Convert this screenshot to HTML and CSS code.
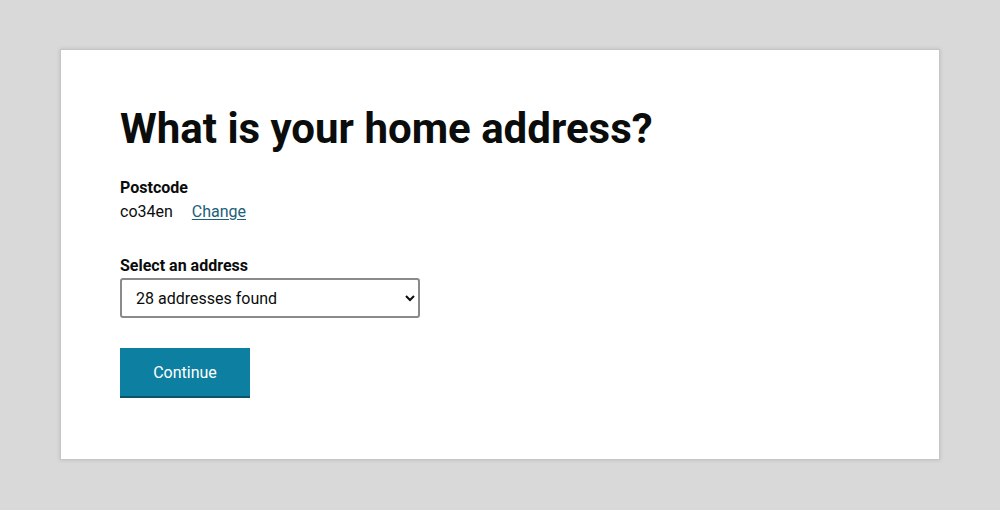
FILE: index.html
```html
<!DOCTYPE html>
<html lang="en">
<head>
<meta charset="utf-8">
<title>What is your home address?</title>
<link rel="stylesheet" href="styles.css">
</head>
<body>
<main class="card">
  <h1 class="title">What is your home address?</h1>
  <div class="postcode">
    <div class="label">Postcode</div>
    <div class="value-row">
      <span class="value">co34en</span>
      <a class="change" href="#">Change</a>
    </div>
  </div>
  <div class="field">
    <label class="label" for="addr">Select an address</label>
    <select class="select" id="addr">
      <option>28 addresses found</option>
    </select>
  </div>
  <button class="btn" type="button">Continue</button>
</main>
</body>
</html>
```
FILE: styles.css
```css
html, body {
  margin: 0;
  padding: 0;
}
body {
  background: #d9d9d9;
  font-family: Roboto, "Liberation Sans", sans-serif;
  color: #0b0c0c;
  padding: 49px 60px 49px 60px;
  height: 510px;
  box-sizing: border-box;
}
.card {
  background: #fff;
  border: 1px solid #c6c6c6;
  box-shadow: 0 0 4px rgba(0, 0, 0, 0.14);
  height: 411px;
  box-sizing: border-box;
  padding: 55px 59px 0;
  display: flex;
  flex-direction: column;
  align-items: flex-start;
}
.title {
  margin: 0;
  font-size: 42px;
  line-height: 48px;
  font-weight: 700;
  letter-spacing: 0;
}
.postcode {
  margin-top: 23px;
}
.label {
  display: block;
  font-size: 16px;
  line-height: 24px;
  font-weight: 700;
}
.value-row {
  display: flex;
  gap: 19px;
  font-size: 16px;
  line-height: 24px;
}
.change {
  color: #1d5e78;
  text-decoration: underline;
  text-underline-offset: 2px;
}
.field {
  margin-top: 30px;
  display: flex;
  flex-direction: column;
}
.select {
  width: 300px;
  height: 40px;
  box-sizing: border-box;
  border: 2px solid #8a8a8a;
  border-radius: 3px;
  background: #fff;
  font-family: Roboto, "Liberation Sans", sans-serif;
  font-size: 16px;
  color: #0b0c0c;
  padding: 0 10px 0 10px;
}
.btn {
  margin-top: 30px;
  width: 130px;
  height: 50px;
  border: 0;
  border-bottom: 2px solid #0b5468;
  background: #0d7fa0;
  color: #fff;
  font-family: Roboto, "Liberation Sans", sans-serif;
  font-size: 16px;
  padding: 0;
  cursor: pointer;
}
```
